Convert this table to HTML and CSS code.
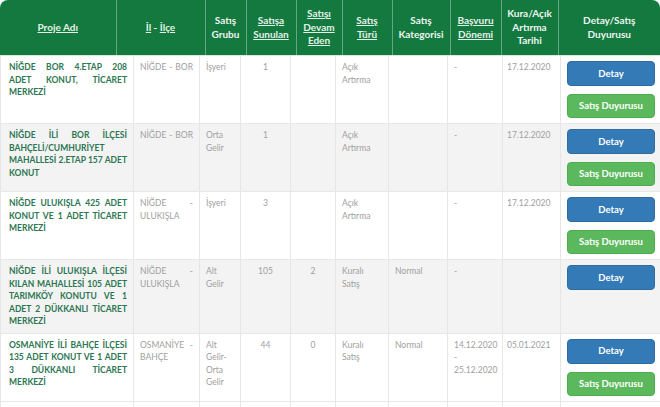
FILE: index.html
```html
<!DOCTYPE html>
<html lang="tr">
<head>
<meta charset="utf-8">
<title>Projeler</title>
<link rel="stylesheet" href="styles.css">
</head>
<body>
<div class="wrap">
  <table class="head">
    <colgroup>
      <col class="h1"><col class="h2"><col class="h3"><col class="h4"><col class="h5"><col class="h6"><col class="h7"><col class="h8"><col class="h9"><col class="h10">
    </colgroup>
    <tr>
      <th><a>Proje Adı</a></th>
      <th><a>İl</a> - <a>İlçe</a></th>
      <th>Satış<br>Grubu</th>
      <th><a>Satışa<br>Sunulan</a></th>
      <th><a>Satışı<br>Devam<br>Eden</a></th>
      <th><a>Satış<br>Türü</a></th>
      <th>Satış<br>Kategorisi</th>
      <th><a>Başvuru<br>Dönemi</a></th>
      <th>Kura/Açık<br>Artırma<br>Tarihi</th>
      <th>Detay/Satış<br>Duyurusu</th>
    </tr>
  </table>
  <table class="body">
    <colgroup>
      <col class="b1"><col class="b2"><col class="b3"><col class="b4"><col class="b5"><col class="b6"><col class="b7"><col class="b8"><col class="b9"><col class="b10">
    </colgroup>
    <tr>
      <td class="name"><span class="ln">NİĞDE BOR 4.ETAP 208</span><span class="ln">ADET KONUT, TİCARET</span><span class="ln">MERKEZİ</span></td>
      <td class="jus"><span class="ln">NİĞDE - BOR</span></td>
      <td>İşyeri</td>
      <td class="c">1</td>
      <td class="c"></td>
      <td>Açık<br>Artırma</td>
      <td></td>
      <td>-</td>
      <td class="date">17.12.2020</td>
      <td class="btns"><a class="btn blue">Detay</a><a class="btn green">Satış Duyurusu</a></td>
    </tr>
    <tr class="alt">
      <td class="name"><span class="ln">NİĞDE İLİ BOR İLÇESİ</span><span class="ln">BAHÇELİ/CUMHURİYET</span><span class="ln">MAHALLESİ 2.ETAP 157 ADET</span><span class="ln">KONUT</span></td>
      <td class="jus"><span class="ln">NİĞDE - BOR</span></td>
      <td>Orta<br>Gelir</td>
      <td class="c">1</td>
      <td class="c"></td>
      <td>Açık<br>Artırma</td>
      <td></td>
      <td>-</td>
      <td class="date">17.12.2020</td>
      <td class="btns"><a class="btn blue">Detay</a><a class="btn green">Satış Duyurusu</a></td>
    </tr>
    <tr>
      <td class="name"><span class="ln">NİĞDE ULUKIŞLA 425 ADET</span><span class="ln">KONUT VE 1 ADET TİCARET</span><span class="ln">MERKEZİ</span></td>
      <td class="jus"><span class="ln">NİĞDE -</span><span class="ln">ULUKIŞLA</span></td>
      <td>İşyeri</td>
      <td class="c">3</td>
      <td class="c"></td>
      <td>Açık<br>Artırma</td>
      <td></td>
      <td>-</td>
      <td class="date">17.12.2020</td>
      <td class="btns"><a class="btn blue">Detay</a><a class="btn green">Satış Duyurusu</a></td>
    </tr>
    <tr class="alt">
      <td class="name"><span class="ln">NİĞDE İLİ ULUKIŞLA İLÇESİ</span><span class="ln">KILAN MAHALLESİ 105 ADET</span><span class="ln">TARIMKÖY KONUTU VE 1</span><span class="ln">ADET 2 DÜKKANLI TİCARET</span><span class="ln">MERKEZİ</span></td>
      <td class="jus"><span class="ln">NİĞDE -</span><span class="ln">ULUKIŞLA</span></td>
      <td>Alt<br>Gelir</td>
      <td class="c">105</td>
      <td class="c">2</td>
      <td>Kuralı<br>Satış</td>
      <td>Normal</td>
      <td>-</td>
      <td class="date"></td>
      <td class="btns"><a class="btn blue">Detay</a></td>
    </tr>
    <tr>
      <td class="name"><span class="ln">OSMANİYE İLİ BAHÇE İLÇESİ</span><span class="ln">135 ADET KONUT VE 1 ADET</span><span class="ln">3 DÜKKANLI TİCARET</span><span class="ln">MERKEZİ</span></td>
      <td class="jus"><span class="ln">OSMANİYE -</span><span class="ln">BAHÇE</span></td>
      <td>Alt<br>Gelir-<br>Orta<br>Gelir</td>
      <td class="c">44</td>
      <td class="c">0</td>
      <td>Kuralı<br>Satış</td>
      <td>Normal</td>
      <td>14.12.2020<br>-<br>25.12.2020</td>
      <td class="date">05.01.2021</td>
      <td class="btns"><a class="btn blue">Detay</a><a class="btn green">Satış Duyurusu</a></td>
    </tr>
    <tr>
      <td class="name">&nbsp;</td>
      <td></td><td></td><td></td><td></td><td></td><td></td><td></td><td></td><td></td>
    </tr>
  </table>
</div>
</body>
</html>
```
FILE: styles.css
```css
* { box-sizing: border-box; }
html, body {
  margin: 0;
  padding: 0;
  background: #ffffff;
  overflow: hidden;
}
body {
  font-family: Lato, "Open Sans", "DejaVu Sans", sans-serif;
  width: 660px;
  height: 407px;
}
.wrap {
  width: 660px;
}
table {
  border-collapse: collapse;
  table-layout: fixed;
  width: 660px;
  border-spacing: 0;
}
.head {
  background: #13793f;
  border-radius: 8px 8px 0 0;
  overflow: hidden;
  height: 55px;
}
.head th {
  color: #eef5f0;
  font-size: 10px;
  font-weight: 700;
  line-height: 13.5px;
  text-align: center;
  vertical-align: middle;
  height: 55px;
  padding: 0 3px;
  border-left: 1px solid rgba(255, 255, 255, 0.35);
}
.head th:first-child { border-left: none; }
.head a { text-decoration: underline; color: #e4f1e8; }
.h1 { width: 116px; }
.h2 { width: 89px; }
.h3 { width: 41px; }
.h4 { width: 50px; }
.h5 { width: 46px; }
.h6 { width: 50px; }
.h7 { width: 58px; }
.h8 { width: 51px; }
.h9 { width: 57px; }
.h10 { width: 102px; }

.b1 { width: 133px; }
.b2 { width: 66px; }
.b3 { width: 41px; }
.b4 { width: 50px; }
.b5 { width: 45px; }
.b6 { width: 53px; }
.b7 { width: 59px; }
.b8 { width: 55px; }
.b9 { width: 58px; }
.b10 { width: 100px; }

.body { border-top: 1px solid #d6ecdd; }
.body td {
  font-size: 8.5px;
  line-height: 12.5px;
  color: #a0a0a0;
  vertical-align: top;
  padding: 5px 6px 5px 6px;
  border-left: 1px solid #e6e6e6;
  border-bottom: 1px solid #e8e8e8;
}
.body tr.alt td { background: #f3f3f3; }
.body td.c { text-align: center; }
.body td.date { padding-left: 4px; }
.body td.name {
  color: #2c7652;
  font-weight: 700;
  padding-left: 8px;
  padding-right: 6px;
}
.ln {
  display: block;
  text-align: justify;
  text-align-last: justify;
}
.body td.btns {
  padding: 5px 5px 5px 6px;
}
.btn {
  display: flex;
  align-items: center;
  justify-content: center;
  width: 88px;
  height: 24px;
  border-radius: 4px;
  color: #ffffff;
  font-size: 9.5px;
  font-weight: 700;
  line-height: 1;
}
.btn + .btn { margin-top: 8px; }
.blue { background: #337ab7; border: 1px solid #2e6da4; height: 25px; }
.green { background: #5cb85c; border: 1px solid #4cae4c; }
```
